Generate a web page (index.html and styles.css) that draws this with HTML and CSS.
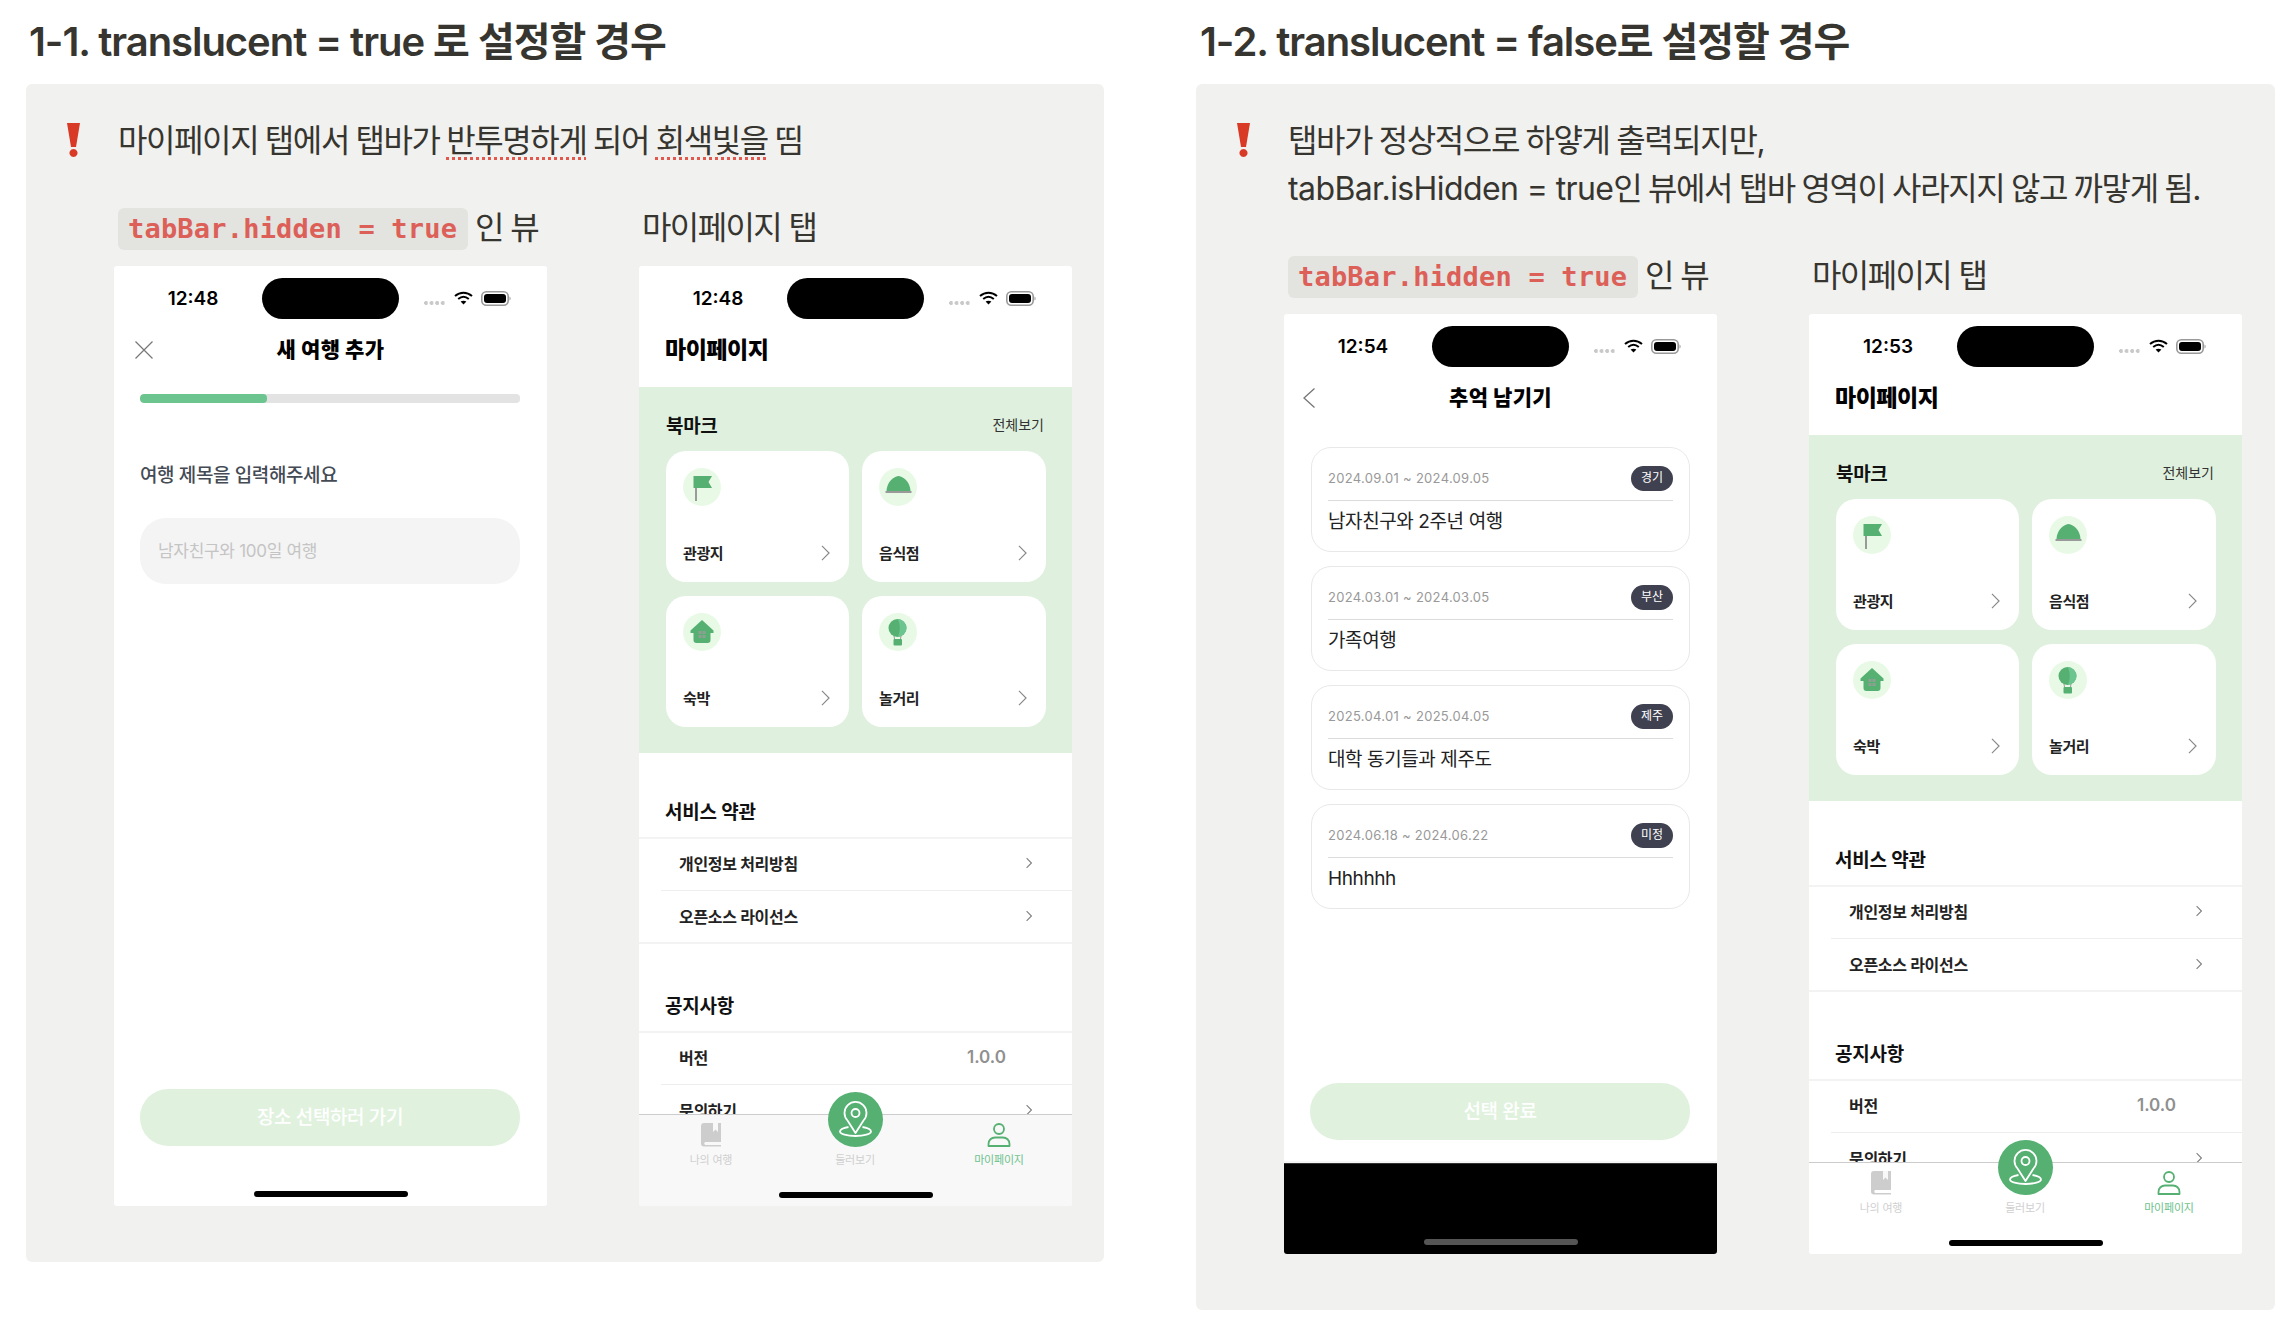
FILE: index.html
```html
<!DOCTYPE html>
<html lang="ko">
<head>
    <meta charset="utf-8">
    <title>translucent 비교</title>
    <link rel="stylesheet" href="styles.css">
</head>
<body>
    <svg class="icon-defs" xmlns="http://www.w3.org/2000/svg">
        <symbol id="i-wifi" viewBox="0 0 19 14">
            <path d="M1 5 C6 0.5 13 0.5 18 5" fill="none" stroke="#000" stroke-width="2"/>
            <path d="M4.2 8 C7.5 5.2 11.5 5.2 14.8 8" fill="none" stroke="#000" stroke-width="2"/>
            <path d="M9.5 13.5 L6.6 10.6 C8.4 9.3 10.6 9.3 12.4 10.6 Z" fill="#000"/>
        </symbol>
        <symbol id="i-battery" viewBox="0 0 30 15">
            <rect x="0.8" y="0.8" width="26.4" height="13.4" rx="4.5" fill="none" stroke="#999" stroke-width="1.6"/>
            <rect x="3" y="3" width="22" height="9" rx="3" fill="#000"/>
            <path d="M28.5 5.5 C30 6 30 9 28.5 9.5 Z" fill="#999"/>
        </symbol>
        <symbol id="i-chevron" viewBox="0 0 10 18">
            <path d="M1 1 L9 9 L1 17" fill="none" stroke="currentColor"/>
        </symbol>
        <symbol id="i-flag" viewBox="0 0 38 38">
            <rect x="12" y="19" width="2" height="14" fill="#9a9a9a"/>
            <path d="M10.5 8 H29 L25.5 14 L29 20 H10.5 Z" fill="#55b072"/>
        </symbol>
        <symbol id="i-cloche" viewBox="0 0 38 38">
            <path d="M7.5 23 C8 14 14 9 19.5 8 C25 9 31 14 31.5 23 Z" fill="#55b072"/>
            <rect x="6.5" y="23" width="26" height="2" fill="#9a9a9a"/>
        </symbol>
        <symbol id="i-house" viewBox="0 0 38 38">
            <path d="M19 7 L30.5 17.5 V20 H27.5 V27 A3 3 0 0 1 24.5 30 H13.5 A3 3 0 0 1 10.5 27 V20 H7.5 V17.5 Z" fill="#55b072"/>
            <path d="M15.5 18 h3 v3 h-3 z M19.5 18 h3 v3 h-3 z M15.5 22 h3 v3 h-3 z M19.5 22 h3 v3 h-3 z" fill="#8f9f94"/>
        </symbol>
        <symbol id="i-balloon" viewBox="0 0 38 38">
            <circle cx="18.5" cy="15" r="9" fill="#55b072"/>
            <path d="M18.5 6 A9 9 0 0 1 18.5 24 C21.5 20 21.5 10 18.5 6 Z" fill="#6cc58f"/>
            <path d="M15 23 L15.5 26 M22 23 L21.5 26" stroke="#9a9a9a" stroke-width="1"/>
            <rect x="14.5" y="26" width="8.5" height="6.5" rx="1" fill="#55b072"/>
        </symbol>
        <symbol id="i-book" viewBox="0 0 20 24">
            <path d="M3 0 H20 V19 H4 A2 2 0 0 0 4 22 H20 V23.5 H3 A3 3 0 0 1 0 20.5 V3 A3 3 0 0 1 3 0 Z" fill="#cdcdcd"/>
            <path d="M12 0 H17 V9 L14.5 6.5 L12 9 Z" fill="#f8f8f8"/>
        </symbol>
        <symbol id="i-pin" viewBox="0 0 55 55">
            <path d="M27.5 41 L19.5 28.5 A11 11 0 1 1 35.5 28.5 Z" fill="none" stroke="#fff" stroke-width="1.8" stroke-linejoin="round"/>
            <circle cx="27.5" cy="21" r="4" fill="none" stroke="#fff" stroke-width="1.8"/>
            <path d="M20.5 35 C15 36 12 37.5 12 39.5 C12 42 19 44 27.5 44 C36 44 43 42 43 39.5 C43 37.5 40 36 34.5 35" fill="none" stroke="#fff" stroke-width="1.8"/>
        </symbol>
        <symbol id="i-person" viewBox="0 0 24 24">
            <circle cx="12" cy="6" r="5" fill="none" stroke="#55b072" stroke-width="1.8"/>
            <path d="M1.5 23 V21 C1.5 17 4.5 14.5 8 14.5 H16 C19.5 14.5 22.5 17 22.5 21 V23 Z" fill="none" stroke="#55b072" stroke-width="1.8" stroke-linejoin="round"/>
        </symbol>
    </svg>

    <div class="page">
        <section class="case">
            <h2 class="case__title">1-1. translucent = true 로 설정할 경우</h2>
            <div class="case__panel">
                <div class="callout">
                    <svg class="callout__icon" viewBox="0 0 13 34"><path d="M0 0 H13 L9 24 H4 Z M6.5 26 A4 4 0 1 1 6.49 26 Z" fill="#d93a26"/></svg>
                    <div class="callout__text">
                        <p>마이페이지 탭에서 탭바가 <span class="typo">반투명하게</span> 되어 <span class="typo">회색빛을</span> 띰</p>
                    </div>
                </div>
                <div class="compare">
                    <div class="compare__col">
                        <div class="compare__label"><code class="pill">tabBar.hidden = true</code> <span class="compare__text">인 뷰</span></div>
                        <div class="phone">
                            <div class="status">
                                <span class="status__time">12:48</span>
                                <span class="status__island"></span>
                                <span class="status__dots"></span>
                                <svg class="status__wifi"><use href="#i-wifi"/></svg>
                                <svg class="status__battery"><use href="#i-battery"/></svg>
                            </div>
                            <div class="nav">
                                <svg class="nav__close" viewBox="0 0 18 18"><path d="M0.5 0.5 L17.5 17.5 M17.5 0.5 L0.5 17.5" stroke="#777" stroke-width="1.2"/></svg>
                                <span class="nav__title">새 여행 추가</span>
                            </div>
                            <div class="progress"><div class="progress__fill" style="width: 33.4%"></div></div>
                            <div class="field__label">여행 제목을 입력해주세요</div>
                            <div class="field__input">남자친구와 100일 여행</div>
                            <div class="cta">장소 선택하러 가기</div>
                            <div class="home"></div>
                        </div>
                    </div>
                    <div class="compare__col">
                        <div class="compare__label compare__label--tab"><span class="compare__text">마이페이지 탭</span></div>
                        <div class="phone">
                            <div class="status">
                                <span class="status__time">12:48</span>
                                <span class="status__island"></span>
                                <span class="status__dots"></span>
                                <svg class="status__wifi"><use href="#i-wifi"/></svg>
                                <svg class="status__battery"><use href="#i-battery"/></svg>
                            </div>
                            <div class="my-title">마이페이지</div>
                            <div class="bookmark">
                                <div class="bookmark__head"><span class="bookmark__title">북마크</span><span class="bookmark__all">전체보기</span></div>
                                <div class="bookmark__grid">
                                    <div class="bm-card">
                                        <div class="bm-card__icon"><svg><use href="#i-flag"/></svg></div>
                                        <div class="bm-card__foot"><span>관광지</span><svg class="bm-card__arrow"><use href="#i-chevron"/></svg></div>
                                    </div>
                                    <div class="bm-card">
                                        <div class="bm-card__icon"><svg><use href="#i-cloche"/></svg></div>
                                        <div class="bm-card__foot"><span>음식점</span><svg class="bm-card__arrow"><use href="#i-chevron"/></svg></div>
                                    </div>
                                    <div class="bm-card">
                                        <div class="bm-card__icon"><svg><use href="#i-house"/></svg></div>
                                        <div class="bm-card__foot"><span>숙박</span><svg class="bm-card__arrow"><use href="#i-chevron"/></svg></div>
                                    </div>
                                    <div class="bm-card">
                                        <div class="bm-card__icon"><svg><use href="#i-balloon"/></svg></div>
                                        <div class="bm-card__foot"><span>놀거리</span><svg class="bm-card__arrow"><use href="#i-chevron"/></svg></div>
                                    </div>
                                </div>
                            </div>
                            <div class="my-section">서비스 약관</div>
                            <div class="my-list">
                                <div class="my-row"><span>개인정보 처리방침</span><svg class="my-row__arrow"><use href="#i-chevron"/></svg></div>
                                <div class="my-row my-row--last"><span>오픈소스 라이선스</span><svg class="my-row__arrow"><use href="#i-chevron"/></svg></div>
                            </div>
                            <div class="my-section my-section--next">공지사항</div>
                            <div class="my-list">
                                <div class="my-row"><span>버전</span><span class="my-row__value">1.0.0</span></div>
                                <div class="my-row my-row--last"><span>문의하기</span><svg class="my-row__arrow"><use href="#i-chevron"/></svg></div>
                            </div>
                            <div class="tabbar tabbar--translucent">
                                <div class="tabbar__items">
                                    <div class="tab"><svg class="tab__book"><use href="#i-book"/></svg><span class="tab__label">나의 여행</span></div>
                                    <div class="tab"><div class="tab__main"><svg><use href="#i-pin"/></svg></div><span class="tab__label">둘러보기</span></div>
                                    <div class="tab tab--active"><svg class="tab__person"><use href="#i-person"/></svg><span class="tab__label">마이페이지</span></div>
                                </div>
                                <div class="home home--tab"></div>
                            </div>
                        </div>
                    </div>
                </div>
            </div>
        </section>

        <section class="case">
            <h2 class="case__title case__title--right">1-2. translucent = false로 설정할 경우</h2>
            <div class="case__panel">
                <div class="callout">
                    <svg class="callout__icon" viewBox="0 0 13 34"><path d="M0 0 H13 L9 24 H4 Z M6.5 26 A4 4 0 1 1 6.49 26 Z" fill="#d93a26"/></svg>
                    <div class="callout__text">
                        <p>탭바가 정상적으로 하얗게 출력되지만,</p>
                        <p><span class="latin">tabBar.isHidden = true</span>인 뷰에서 탭바 영역이 사라지지 않고 까맣게 됨.</p>
                    </div>
                </div>
                <div class="compare">
                    <div class="compare__col">
                        <div class="compare__label"><code class="pill">tabBar.hidden = true</code> <span class="compare__text">인 뷰</span></div>
                        <div class="phone">
                            <div class="status">
                                <span class="status__time">12:54</span>
                                <span class="status__island"></span>
                                <span class="status__dots"></span>
                                <svg class="status__wifi"><use href="#i-wifi"/></svg>
                                <svg class="status__battery"><use href="#i-battery"/></svg>
                            </div>
                            <div class="nav">
                                <svg class="nav__back" viewBox="0 0 12 20"><path d="M11.5 0.5 L1 10 L11.5 19.5" fill="none" stroke="#777" stroke-width="1.3"/></svg>
                                <span class="nav__title">추억 남기기</span>
                            </div>
                            <div class="memories">
                                <div class="memory">
                                    <div class="memory__head"><span class="memory__date">2024.09.01 ~ 2024.09.05</span><span class="memory__badge">경기</span></div>
                                    <div class="memory__name">남자친구와 2주년 여행</div>
                                </div>
                                <div class="memory">
                                    <div class="memory__head"><span class="memory__date">2024.03.01 ~ 2024.03.05</span><span class="memory__badge">부산</span></div>
                                    <div class="memory__name">가족여행</div>
                                </div>
                                <div class="memory">
                                    <div class="memory__head"><span class="memory__date">2025.04.01 ~ 2025.04.05</span><span class="memory__badge">제주</span></div>
                                    <div class="memory__name">대학 동기들과 제주도</div>
                                </div>
                                <div class="memory">
                                    <div class="memory__head"><span class="memory__date">2024.06.18 ~ 2024.06.22</span><span class="memory__badge">미정</span></div>
                                    <div class="memory__name">Hhhhhh</div>
                                </div>
                            </div>
                            <div class="cta cta--done">선택 완료</div>
                            <div class="black-bar"><div class="home home--dim"></div></div>
                        </div>
                    </div>
                    <div class="compare__col">
                        <div class="compare__label compare__label--tab"><span class="compare__text">마이페이지 탭</span></div>
                        <div class="phone">
                            <div class="status">
                                <span class="status__time">12:53</span>
                                <span class="status__island"></span>
                                <span class="status__dots"></span>
                                <svg class="status__wifi"><use href="#i-wifi"/></svg>
                                <svg class="status__battery"><use href="#i-battery"/></svg>
                            </div>
                            <div class="my-title">마이페이지</div>
                            <div class="bookmark">
                                <div class="bookmark__head"><span class="bookmark__title">북마크</span><span class="bookmark__all">전체보기</span></div>
                                <div class="bookmark__grid">
                                    <div class="bm-card">
                                        <div class="bm-card__icon"><svg><use href="#i-flag"/></svg></div>
                                        <div class="bm-card__foot"><span>관광지</span><svg class="bm-card__arrow"><use href="#i-chevron"/></svg></div>
                                    </div>
                                    <div class="bm-card">
                                        <div class="bm-card__icon"><svg><use href="#i-cloche"/></svg></div>
                                        <div class="bm-card__foot"><span>음식점</span><svg class="bm-card__arrow"><use href="#i-chevron"/></svg></div>
                                    </div>
                                    <div class="bm-card">
                                        <div class="bm-card__icon"><svg><use href="#i-house"/></svg></div>
                                        <div class="bm-card__foot"><span>숙박</span><svg class="bm-card__arrow"><use href="#i-chevron"/></svg></div>
                                    </div>
                                    <div class="bm-card">
                                        <div class="bm-card__icon"><svg><use href="#i-balloon"/></svg></div>
                                        <div class="bm-card__foot"><span>놀거리</span><svg class="bm-card__arrow"><use href="#i-chevron"/></svg></div>
                                    </div>
                                </div>
                            </div>
                            <div class="my-section">서비스 약관</div>
                            <div class="my-list">
                                <div class="my-row"><span>개인정보 처리방침</span><svg class="my-row__arrow"><use href="#i-chevron"/></svg></div>
                                <div class="my-row my-row--last"><span>오픈소스 라이선스</span><svg class="my-row__arrow"><use href="#i-chevron"/></svg></div>
                            </div>
                            <div class="my-section my-section--next">공지사항</div>
                            <div class="my-list">
                                <div class="my-row"><span>버전</span><span class="my-row__value">1.0.0</span></div>
                                <div class="my-row my-row--last"><span>문의하기</span><svg class="my-row__arrow"><use href="#i-chevron"/></svg></div>
                            </div>
                            <div class="tabbar">
                                <div class="tabbar__items">
                                    <div class="tab"><svg class="tab__book"><use href="#i-book"/></svg><span class="tab__label">나의 여행</span></div>
                                    <div class="tab"><div class="tab__main"><svg><use href="#i-pin"/></svg></div><span class="tab__label">둘러보기</span></div>
                                    <div class="tab tab--active"><svg class="tab__person"><use href="#i-person"/></svg><span class="tab__label">마이페이지</span></div>
                                </div>
                                <div class="home home--tab"></div>
                            </div>
                        </div>
                    </div>
                </div>
            </div>
        </section>
    </div>
</body>
</html>
```

FILE: styles.css
```css
* {
    margin: 0;
    padding: 0;
    box-sizing: border-box;
}

body {
    font-family: Inter, "Noto Sans CJK KR", sans-serif;
    background: white;
    color: #37352f;
    width: 2292px;
    height: 1326px;
    overflow: hidden;
}

.icon-defs {
    display: none;
}

.page {
    display: grid;
    grid-template-columns: 1078px 1079px;
    column-gap: 92px;
    align-items: start;
    padding: 16px 0 0 26px;
}

/* case column */
.case__title {
    font-size: 40px;
    line-height: 52px;
    font-weight: 600;
    letter-spacing: -1.05px;
    padding-left: 3px;
    margin-bottom: 16px;
    white-space: nowrap;
}

.case__title--right {
    padding-left: 4px;
}

.case__panel {
    background: #f1f1ef;
    border-radius: 6px;
    padding: 33px 0 56px 88px;
}

.callout {
    display: flex;
    margin-left: -47px;
    gap: 38px;
}

.callout__icon {
    width: 13px;
    height: 34px;
    margin-top: 6px;
    flex-shrink: 0;
}

.callout__text {
    font-size: 32px;
    line-height: 48px;
    letter-spacing: -1.4px;
    word-spacing: -1px;
    white-space: nowrap;
}

.latin {
    letter-spacing: -0.6px;
    word-spacing: 0;
}

.typo {
    text-decoration: underline dotted #e2584d 3px;
    text-underline-offset: 5px;
}

.compare {
    display: flex;
    gap: 92px;
    margin-top: 43px;
}

.compare__col {
    width: 433px;
}

.compare__label {
    height: 42px;
    margin-bottom: 16px;
    padding-left: 4px;
    display: flex;
    align-items: center;
    gap: 7px;
    font-size: 32px;
    letter-spacing: -1.6px;
    white-space: nowrap;
}

.compare__label--tab {
    padding-left: 3px;
}

.compare__text {
    margin-bottom: 9px;
}

.pill {
    font-family: "DejaVu Sans Mono", monospace;
    font-size: 27px;
    font-weight: 700;
    letter-spacing: 0.2px;
    color: #dc6058;
    background: #e3e3e0;
    border-radius: 6px;
    width: 350px;
    height: 42px;
    line-height: 42px;
    padding: 0 10px;
}

/* phone */
.phone {
    position: relative;
    width: 433px;
    height: 940px;
    background: white;
    border-radius: 3px;
    overflow: hidden;
    display: flex;
    flex-direction: column;
    color: #111;
}

.status {
    height: 60px;
    padding-top: 12px;
    display: flex;
    align-items: flex-start;
}

.status__time {
    width: 148px;
    padding-left: 10px;
    height: 41px;
    line-height: 42px;
    text-align: center;
    font-size: 19px;
    font-weight: 600;
    color: #000;
}

.status__island {
    width: 137px;
    height: 41px;
    border-radius: 21px;
    background: black;
}

.status__dots {
    width: 22px;
    height: 4px;
    margin: 23px 0 0 25px;
    background: radial-gradient(circle at 2px 2px, #c9c9c9 1.8px, transparent 2.2px) 0 0 / 5.6px 4px repeat-x;
}

.status__wifi {
    width: 19px;
    height: 14px;
    margin: 13px 0 0 8px;
}

.status__battery {
    width: 30px;
    height: 15px;
    margin: 13px 0 0 8px;
}

.nav {
    position: relative;
    height: 48px;
    display: flex;
    align-items: center;
    justify-content: center;
}

.nav__title {
    font-size: 21px;
    line-height: 46px;
    height: 46px;
    font-weight: 900;
    letter-spacing: 0.4px;
    color: #000;
}

.nav__close {
    position: absolute;
    left: 21px;
    top: 15px;
    width: 18px;
    height: 18px;
}

.nav__back {
    position: absolute;
    left: 19px;
    top: 14px;
    width: 12px;
    height: 20px;
}

/* new trip screen */
.progress {
    height: 9px;
    margin: 20px 27px 0 26px;
    border-radius: 4px;
    background: #e3e3e3;
    overflow: hidden;
}

.progress__fill {
    height: 100%;
    border-radius: 4px;
    background: #6cc58f;
}

.field__label {
    margin: 60px 0 0 26px;
    font-size: 19px;
    line-height: 26px;
    font-weight: 500;
    letter-spacing: -0.4px;
    color: #444b55;
}

.field__input {
    height: 66px;
    margin: 29px 27px 0 26px;
    padding-left: 18px;
    line-height: 66px;
    border-radius: 26px;
    background: #f4f4f4;
    font-size: 17px;
    letter-spacing: -0.3px;
    color: #c4c4c4;
}

.cta {
    height: 57px;
    margin: auto 27px 0 26px;
    border-radius: 28px;
    background: #e0f2de;
    color: white;
    text-align: center;
    line-height: 57px;
    font-size: 19px;
    font-weight: 500;
    letter-spacing: -0.4px;
}

.cta--done {
    margin-bottom: 23px;
}

.home {
    width: 154px;
    height: 6px;
    margin: 45px auto 9px;
    border-radius: 3px;
    background: black;
}

.home--tab {
    margin: 24px auto 9px;
}

.home--dim {
    margin: 0 auto;
    background: #555;
}

.black-bar {
    height: 91px;
    padding-top: 75px;
    background: black;
    border-top: 1px solid #333;
    box-shadow: 0 -2px 0 #f6f6f6;
}

/* memory list */
.memories {
    padding: 25px 27px 0;
    display: flex;
    flex-direction: column;
    gap: 14px;
}

.memory {
    height: 105px;
    padding: 18px 16px 0;
    border: 1px solid #e8e8e8;
    border-radius: 20px;
}

.memory__head {
    height: 35px;
    display: flex;
    align-items: flex-start;
    justify-content: space-between;
    border-bottom: 1px solid #dcdcdc;
}

.memory__date {
    line-height: 25px;
    font-size: 13px;
    letter-spacing: 0.3px;
    color: #999;
}

.memory__badge {
    width: 42px;
    height: 25px;
    line-height: 24px;
    border-radius: 13px;
    background: #3f4150;
    color: white;
    text-align: center;
    font-size: 12px;
}

.memory__name {
    margin-top: 8px;
    font-size: 19px;
    line-height: 26px;
    letter-spacing: -0.4px;
    color: #222;
}

/* my page screen */
.my-title {
    height: 61px;
    padding: 10px 0 0 26px;
    font-size: 23px;
    line-height: 28px;
    font-weight: 900;
    letter-spacing: -0.5px;
    color: #000;
}

.bookmark {
    height: 366px;
    padding: 23px 26px 0 27px;
    background: #dff1de;
}

.bookmark__head {
    height: 28px;
    margin-bottom: 13px;
    display: flex;
    align-items: center;
    justify-content: space-between;
}

.bookmark__title {
    font-size: 19px;
    font-weight: 700;
    letter-spacing: -0.3px;
}

.bookmark__all {
    font-size: 14px;
    letter-spacing: 0;
    color: #333;
    margin-right: 2px;
}

.bookmark__grid {
    display: grid;
    grid-template-columns: 183px 184px;
    grid-auto-rows: 131px;
    column-gap: 13px;
    row-gap: 14px;
}

.bm-card {
    padding: 17px 19px 17px 17px;
    border-radius: 20px;
    background: white;
    display: flex;
    flex-direction: column;
    justify-content: space-between;
}

.bm-card__icon {
    width: 38px;
    height: 38px;
    border-radius: 50%;
    background: #e8fae6;
}

.bm-card__icon svg {
    display: block;
    width: 38px;
    height: 38px;
}

.bm-card__foot {
    height: 24px;
    display: flex;
    align-items: center;
    justify-content: space-between;
    font-size: 15px;
    font-weight: 700;
    letter-spacing: -0.4px;
    color: #222;
}

.bm-card__foot span {
    margin-bottom: 1px;
}

.bm-card__arrow {
    width: 9px;
    height: 16px;
    color: #888;
    stroke-width: 1.3;
}

.my-section {
    height: 86px;
    padding-top: 46px;
    line-height: 28px;
    padding-left: 26px;
    border-bottom: 2px solid #f3f3f3;
    font-size: 19px;
    font-weight: 700;
    letter-spacing: -0.2px;
    flex-shrink: 0;
}

.my-section--next {
    height: 89px;
    padding-top: 49px;
}

.my-list {
    flex-shrink: 0;
}

.my-row {
    height: 52px;
    margin-left: 22px;
    padding: 0 40px 3px 18px;
    display: flex;
    align-items: center;
    justify-content: space-between;
    border-bottom: 1px solid #eeeeee;
    font-size: 16px;
    font-weight: 700;
    letter-spacing: -0.3px;
    color: #222;
}

.my-row--last {
    height: 53px;
    margin-left: 0;
    padding: 0 40px 1px 40px;
    border-bottom: 2px solid #f3f3f3;
}

.my-row__arrow {
    width: 6px;
    height: 12px;
    color: #808080;
    stroke-width: 1.8;
}

.my-row__value {
    margin-right: 26px;
    font-size: 17px;
    font-weight: 600;
    letter-spacing: 0;
    color: #909090;
}

/* tab bar lies over the scrolled list */
.tabbar {
    position: absolute;
    left: 0;
    right: 0;
    bottom: 0;
    height: 92px;
    background: white;
    border-top: 1px solid #cccccc;
}

.tabbar--translucent {
    background: #f8f8f8;
}

.tabbar__items {
    display: grid;
    grid-template-columns: repeat(3, 144px);
    height: 53px;
}

.tab {
    padding-top: 8px;
    display: flex;
    flex-direction: column;
    align-items: center;
}

.tab__book {
    width: 20px;
    height: 24px;
}

.tab__person {
    width: 24px;
    height: 24px;
}

.tab__main {
    width: 55px;
    height: 55px;
    margin-top: -31px;
    border-radius: 50%;
    background: #55b072;
}

.tab__main svg {
    display: block;
    width: 55px;
    height: 55px;
}

.tab__label {
    margin-top: 5px;
    font-size: 11px;
    line-height: 16px;
    letter-spacing: -0.2px;
    color: #cfcfcf;
}

.tab--active .tab__label {
    color: #6dc28d;
}
```
